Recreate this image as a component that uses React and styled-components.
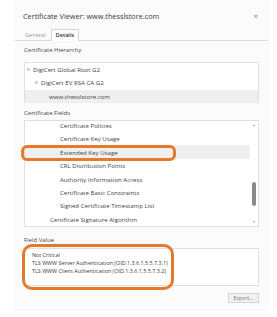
import React from "react";
import styled, { createGlobalStyle } from "styled-components";

const Global = createGlobalStyle`
  html, body { margin: 0; padding: 0; background: #ffffff; }
  body { font-family: "Open Sans", "Noto Sans", sans-serif; color: #333; }
`;

const Page = styled.div`
  width: 277px;
  height: 317px;
  overflow: hidden;
  padding-left: 15px;
  box-sizing: border-box;
`;

const Dialog = styled.div`
  width: 253px;
  height: 310px;
  background: #fbfbfb;
  box-shadow: 0 0 1px rgba(0, 0, 0, 0.12);
  display: flex;
  flex-direction: column;
  box-sizing: border-box;
`;

const TitleBar = styled.div`
  height: 28px;
  display: flex;
  align-items: center;
  justify-content: space-between;
  padding: 3px 10px 0 8px;
  box-sizing: border-box;
`;

const Title = styled.div`
  font-size: 7.3px;
  color: #3a3a3a;
  white-space: nowrap;
`;

const Close = styled.div`
  font-size: 8px;
  color: #777;
  line-height: 1;
`;

const Tabs = styled.div`
  height: 12px;
  display: flex;
  align-items: flex-end;
  border-bottom: 1px solid #dcdcdc;
  padding-left: 9px;
  gap: 4px;
`;

const Tab = styled.div`
  font-size: 5.6px;
  height: 11px;
  line-height: 11px;
  padding: 0 ${(p) => (p.$active ? "4px" : "0")};
  color: ${(p) => (p.$active ? "#333" : "#999")};
  font-weight: ${(p) => (p.$active ? 600 : 400)};
  background: ${(p) => (p.$active ? "#fff" : "transparent")};
  border: 1px solid ${(p) => (p.$active ? "#d4d4d4" : "transparent")};
  border-bottom: none;
  margin-bottom: -1px;
  position: relative;
`;

const Body = styled.div`
  padding: 0 9px;
  display: flex;
  flex-direction: column;
`;

const Label = styled.div`
  font-size: 6px;
  color: #444;
  height: 8px;
  line-height: 8px;
  margin: ${(p) => p.$m};
`;

const Box = styled.div`
  position: relative;
  background: #fff;
  border: 1px solid #e0e0e0;
  box-sizing: border-box;
  height: ${(p) => p.$h}px;
  margin-top: ${(p) => p.$mt}px;
`;

const TreeRow = styled.div`
  height: 13.33px;
  display: flex;
  align-items: center;
  padding-left: ${(p) => p.$indent}px;
  font-size: 6.1px;
  color: #444;
  background: ${(p) => (p.$selected ? "#efefef" : "transparent")};
  gap: 3px;
  white-space: nowrap;
`;

const Marker = () => (
  <svg width="3" height="3" viewBox="0 0 3 3">
    <path d="M0 0.8H3M0 2.2H3" stroke="#999" strokeWidth="0.6" />
  </svg>
);

const FieldsViewport = styled.div`
  position: absolute;
  inset: 0;
  overflow: hidden;
  display: flex;
`;

const FieldsList = styled.div`
  flex: 1;
  margin-top: -2.4px;
  display: flex;
  flex-direction: column;
`;

const FieldRow = styled.div`
  height: 13.45px;
  flex: none;
  display: flex;
  align-items: center;
  padding-left: ${(p) => p.$indent}px;
  font-size: 6.1px;
  color: #444;
  white-space: nowrap;
  background: ${(p) => (p.$selected ? "#efefef" : "transparent")};
`;

const Scrollbar = styled.div`
  width: 8px;
  display: flex;
  flex-direction: column;
  align-items: center;
  justify-content: space-between;
  padding: 3px 0;
  box-sizing: border-box;
`;

const Arrow = styled.div`
  width: 0;
  height: 0;
  border-left: 1.5px solid transparent;
  border-right: 1.5px solid transparent;
  ${(p) =>
    p.$down
      ? "border-top: 2px solid #9a9a9a;"
      : "border-bottom: 2px solid #9a9a9a;"}
`;

const Track = styled.div`
  flex: 1;
  width: 100%;
  display: flex;
  flex-direction: column;
  align-items: center;
  padding-top: 56px;
`;

const Thumb = styled.div`
  width: 4px;
  height: 24px;
  border-radius: 2px;
  background: #8a8a8a;
`;

const Callout = styled.div`
  position: absolute;
  left: ${(p) => p.$l}px;
  top: ${(p) => p.$t}px;
  width: ${(p) => p.$w}px;
  height: ${(p) => p.$h}px;
  border: 3px solid #e57a2c;
  border-radius: ${(p) => p.$r}px;
  box-sizing: border-box;
  pointer-events: none;
`;

const ValueText = styled.div`
  padding: 2px 0 0 7px;
  font-size: 5.4px;
  line-height: 8.2px;
  color: #3a3a3a;
  white-space: nowrap;
`;

const Footer = styled.div`
  display: flex;
  justify-content: flex-end;
  margin-top: 7px;
`;

const Button = styled.div`
  width: 31px;
  height: 10px;
  box-sizing: border-box;
  border: 1px solid #d4d4d4;
  background: #f1f1f1;
  font-size: 5.2px;
  line-height: 8px;
  text-align: center;
  color: #777;
`;

const fields = [
  { t: "Certificate Policies", i: 35 },
  { t: "Certificate Key Usage", i: 35 },
  { t: "Extended Key Usage", i: 35, s: true },
  { t: "CRL Distribution Points", i: 35 },
  { t: "Authority Information Access", i: 35 },
  { t: "Certificate Basic Constraints", i: 35 },
  { t: "Signed Certificate Timestamp List", i: 35 },
  { t: "Certificate Signature Algorithm", i: 25 },
];

export default function App() {
  return (
    <>
      <Global />
      <Page>
        <Dialog>
          <TitleBar>
            <Title>Certificate Viewer: www.thesslstore.com</Title>
            <Close>×</Close>
          </TitleBar>
          <Tabs>
            <Tab>General</Tab>
            <Tab $active>Details</Tab>
          </Tabs>
          <Body>
            <Label $m="5px 0 0 0">Certificate Hierarchy</Label>
            <Box $h={41} $mt={8}>
              <TreeRow $indent={2}>
                <Marker />
                DigiCert Global Root G2
              </TreeRow>
              <TreeRow $indent={10}>
                <Marker />
                DigiCert EV RSA CA G2
              </TreeRow>
              <TreeRow $indent={24} $selected>
                www.thesslstore.com
              </TreeRow>
            </Box>
            <Label $m="6px 0 0 0">Certificate Fields</Label>
            <Box $h={107} $mt={3}>
              <FieldsViewport>
                <FieldsList>
                  {fields.map((f) => (
                    <FieldRow key={f.t} $indent={f.i} $selected={f.s}>
                      {f.t}
                    </FieldRow>
                  ))}
                </FieldsList>
                <Scrollbar>
                  <Arrow />
                  <Track>
                    <Thumb />
                  </Track>
                  <Arrow $down />
                </Scrollbar>
              </FieldsViewport>
              <Callout $l={-4} $t={24} $w={155} $h={16} $r={6} />
            </Box>
            <Label $m="9px 0 0 0">Field Value</Label>
            <Box $h={38} $mt={4}>
              <ValueText>
                Not Critical
                <br />
                TLS WWW Server Authentication (OID.1.3.6.1.5.5.7.3.1)
                <br />
                TLS WWW Client Authentication (OID.1.3.6.1.5.5.7.3.2)
              </ValueText>
              <Callout $l={-3} $t={-5} $w={152} $h={46} $r={10} />
            </Box>
            <Footer>
              <Button>Export...</Button>
            </Footer>
          </Body>
        </Dialog>
      </Page>
    </>
  );
}
